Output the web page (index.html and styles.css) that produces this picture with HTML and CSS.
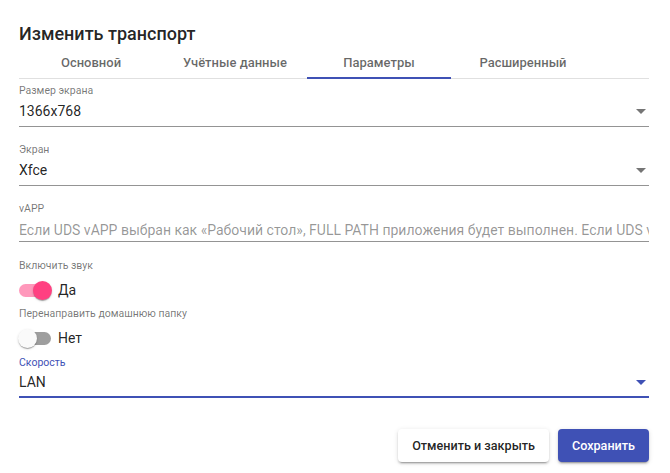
FILE: index.html
```html
<!doctype html>

<html lang="ru">
<head>
	<meta charset="utf-8">
	<title>Изменить транспорт</title>
	<link rel="stylesheet" href="styles.css">
</head>

<body>
	<div class="dialog">
		<h1 class="dialog-title">Изменить транспорт</h1>

		<div class="tabs">
			<div class="tab">Основной</div>
			<div class="tab">Учётные данные</div>
			<div class="tab active">Параметры</div>
			<div class="tab">Расширенный</div>
		</div>

		<div class="fields">
			<div class="field field-first">
				<div class="field-label">Размер экрана</div>
				<div class="field-value select">
					<span>1366x768</span>
					<span class="arrow"></span>
				</div>
			</div>

			<div class="field">
				<div class="field-label">Экран</div>
				<div class="field-value select">
					<span>Xfce</span>
					<span class="arrow"></span>
				</div>
			</div>

			<div class="field">
				<div class="field-label">vAPP</div>
				<div class="field-value input">
					<span class="placeholder">Если UDS vAPP выбран как «Рабочий стол», FULL PATH приложения будет выполнен. Если UDS vAPP не выбран, будет использовано значение по умолчанию</span>
				</div>
			</div>

			<div class="toggle-field toggle-first">
				<div class="field-label">Включить звук</div>
				<div class="toggle on">
					<span class="toggle-bar"><span class="toggle-thumb"></span></span>
					<span class="toggle-text">Да</span>
				</div>
			</div>

			<div class="toggle-field">
				<div class="field-label">Перенаправить домашнюю папку</div>
				<div class="toggle">
					<span class="toggle-bar"><span class="toggle-thumb"></span></span>
					<span class="toggle-text">Нет</span>
				</div>
			</div>

			<div class="field field-focused">
				<div class="field-label">Скорость</div>
				<div class="field-value select">
					<span>LAN</span>
					<span class="arrow"></span>
				</div>
			</div>
		</div>

		<div class="actions">
			<button class="btn btn-plain">Отменить и закрыть</button>
			<button class="btn btn-primary">Сохранить</button>
		</div>
	</div>
</body>
</html>
```

FILE: styles.css
```css
* { box-sizing: border-box; }

html,
body {
	background: #fff;
	margin: 0;
	padding: 0;
	font-family: Roboto, "Liberation Sans", sans-serif;
	color: rgba(0, 0, 0, 0.87);
}

.dialog {
	width: 670px;
	height: 473px;
	padding: 22px 21px 0 19px;
	overflow: hidden;
}

.dialog-title {
	margin: 0;
	font-size: 18px;
	font-weight: 500;
	line-height: 24px;
	height: 26px;
}

/* tabs */
.tabs {
	display: flex;
	height: 31px;
	border-bottom: 1px solid #e0e0e0;
}

.tab {
	width: 144px;
	text-align: center;
	font-size: 13px;
	font-weight: 500;
	line-height: 30px;
	color: rgba(0, 0, 0, 0.6);
}

.tab.active {
	border-bottom: 2px solid #3f51b5;
	margin-bottom: -1px;
}

/* form fields */
.fields {
	display: flex;
	flex-direction: column;
}

.field {
	margin-top: 16px;
}

.field-first {
	margin-top: 5px;
}

.field-label {
	font-size: 10.5px;
	line-height: 14px;
	height: 14px;
	color: rgba(0, 0, 0, 0.54);
	white-space: nowrap;
}

.field-value {
	display: flex;
	align-items: center;
	height: 29px;
	padding: 3px 0 5px;
	font-size: 14px;
	line-height: 20px;
	border-bottom: 1px solid rgba(0, 0, 0, 0.42);
	white-space: nowrap;
	overflow: hidden;
}

.field-value.select span:first-child {
	flex: 1;
}

.field-value.input {
	height: 26px;
	padding: 4px 0 1px;
}

.placeholder {
	color: rgba(0, 0, 0, 0.42);
}

.arrow {
	width: 0;
	height: 0;
	margin-right: 3px;
	border-left: 5px solid transparent;
	border-right: 5px solid transparent;
	border-top: 5px solid rgba(0, 0, 0, 0.54);
}

.field-focused {
	margin-top: 6px;
}

.field-focused .field-label {
	color: #3f51b5;
}

.field-focused .field-value {
	height: 28px;
	padding: 2px 0 4px;
	border-bottom: 2px solid #3f51b5;
}

.field-focused .arrow {
	border-top-color: #3f51b5;
}

/* toggles */
.toggle-field {
	margin-top: 5px;
}

.toggle-first {
	margin-top: 17px;
}

.toggle {
	display: flex;
	align-items: center;
	height: 24px;
	margin-top: 5px;
}

.toggle-bar {
	position: relative;
	width: 32px;
	height: 13px;
	border-radius: 7px;
	background: rgba(0, 0, 0, 0.38);
}

.toggle-thumb {
	position: absolute;
	top: -3px;
	left: -1px;
	width: 19px;
	height: 19px;
	border-radius: 50%;
	background: #fafafa;
	box-shadow: 0 2px 1px -1px rgba(0, 0, 0, 0.2), 0 1px 1px 0 rgba(0, 0, 0, 0.14), 0 1px 3px 0 rgba(0, 0, 0, 0.12);
}

.toggle.on .toggle-bar {
	background: rgba(255, 64, 129, 0.54);
}

.toggle.on .toggle-thumb {
	left: 14px;
	background: #ff4081;
}

.toggle-text {
	margin-left: 7px;
	font-size: 14px;
}

/* buttons */
.actions {
	display: flex;
	justify-content: flex-end;
	gap: 9px;
	margin-top: 31px;
}

.btn {
	height: 33px;
	padding: 0 14px;
	border: 0;
	border-radius: 4px;
	font-family: Roboto, "Liberation Sans", sans-serif;
	font-size: 12.6px;
	font-weight: 500;
	box-shadow: 0 3px 1px -2px rgba(0, 0, 0, 0.2), 0 2px 2px 0 rgba(0, 0, 0, 0.14), 0 1px 5px 0 rgba(0, 0, 0, 0.12);
}

.btn-plain {
	background: #fff;
	color: rgba(0, 0, 0, 0.87);
}

.btn-primary {
	background: #3f51b5;
	color: #fff;
}
```
